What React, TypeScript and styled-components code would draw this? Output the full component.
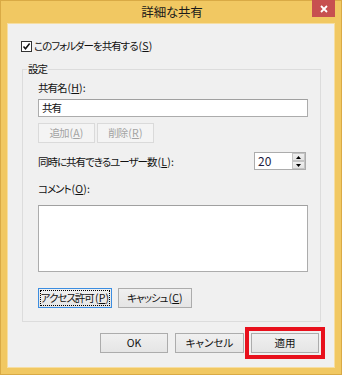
import styled, { createGlobalStyle, css } from 'styled-components';

const GlobalStyle = createGlobalStyle`
  html, body {
    margin: 0;
    padding: 0;
    background: #ffffff;
  }
  body {
    font-family: "Noto Sans CJK JP", "Noto Sans", sans-serif;
    font-size: 10.5px;
    color: #111111;
    font-feature-settings: "palt" 1;
    font-variant-east-asian: proportional-width;
    letter-spacing: -1px;
  }
`;

const Window = styled.div`
  box-sizing: border-box;
  width: 342px;
  height: 375px;
  display: flex;
  flex-direction: column;
  background: #f1c862;
  border: 1px solid #d9aa45;
  padding: 0 6px 6px;
`;

const TitleBar = styled.div`
  height: 22px;
  display: grid;
  grid-template-columns: 1fr auto 1fr;
  align-items: start;
`;

const Title = styled.div`
  grid-column: 2;
  font-size: 12.5px;
  line-height: 22px;
  color: #1a1a1a;
  letter-spacing: -0.2px;
  padding-left: 2px;
`;

const CloseButton = styled.div`
  grid-column: 3;
  justify-self: end;
  width: 23px;
  height: 17px;
  margin-top: -1px;
  background: #c75050;
  display: flex;
  align-items: center;
  justify-content: center;
`;

const Client = styled.div`
  flex: 1;
  display: flex;
  flex-direction: column;
  background: #f0f0f0;
  border: 1px solid #f6dea2;
  padding: 14px 13px 0 14px;
`;

const CheckRow = styled.label`
  display: flex;
  align-items: center;
  gap: 2px;
  height: 16px;
  line-height: 16px;
  margin-left: -1px;
  white-space: nowrap;
`;

const CheckBox = styled.span`
  box-sizing: border-box;
  width: 11px;
  height: 11px;
  border: 1px solid #333333;
  background: #ffffff;
  display: flex;
  align-items: center;
  justify-content: center;
`;

const Key = styled.span`
  letter-spacing: 0.2px;
  margin-left: 1px;
`;

const Group = styled.fieldset`
  margin: 8px 0 0 0;
  padding: 5px 12px 13px 15px;
  border: 1px solid #dcdcdc;
  min-width: 0;
  display: flex;
  flex-direction: column;
`;

const Legend = styled.legend`
  padding: 0 1px;
  margin-left: -11px;
  line-height: 14px;
`;

const Label = styled.div<{ $gap?: number }>`
  line-height: 14px;
  margin-top: ${(p) => p.$gap ?? 0}px;
  white-space: nowrap;
`;

const TextBox = styled.div<{ $h: number; $gap: number }>`
  box-sizing: border-box;
  height: ${(p) => p.$h}px;
  margin-top: ${(p) => p.$gap}px;
  background: #ffffff;
  border: 1px solid #acacac;
  border-top-color: #a0a0a0;
  padding: 0 3px;
  line-height: 16px;
`;

const ButtonRow = styled.div<{ $gap: number; $space: number }>`
  display: flex;
  gap: ${(p) => p.$space}px;
  margin-top: ${(p) => p.$gap}px;
`;

const Button = styled.div<{ $w: number; $disabled?: boolean; $focused?: boolean }>`
  box-sizing: border-box;
  width: ${(p) => p.$w}px;
  height: 20px;
  display: flex;
  align-items: center;
  justify-content: center;
  white-space: nowrap;
  border: 1px solid #acacac;
  background: linear-gradient(#f0f0f0, #e5e5e5);
  line-height: 14px;
  ${(p) =>
    p.$disabled &&
    css`
      background: #f4f4f4;
      border-color: #dadada;
      color: #a3a3a3;
    `}
  ${(p) =>
    p.$focused &&
    css`
      border-color: #3c8de0;
      outline: 1px dotted #000000;
      outline-offset: -3px;
    `}
`;

const SpinRow = styled.div`
  display: flex;
  align-items: center;
  justify-content: space-between;
  margin-top: 9px;
  padding-right: 2px;
  white-space: nowrap;
`;

const Spinner = styled.div`
  box-sizing: border-box;
  width: 52px;
  height: 18px;
  display: flex;
  align-items: stretch;
  background: #ffffff;
  border: 1px solid #acacac;
`;

const SpinValue = styled.div`
  flex: 1;
  padding-left: 3px;
  line-height: 16px;
  font-size: 12px;
  letter-spacing: 0;
  color: #1c1c40;
`;

const SpinButtons = styled.div`
  width: 13px;
  display: flex;
  flex-direction: column;
`;

const SpinButton = styled.div`
  flex: 1;
  box-sizing: border-box;
  background: linear-gradient(#efefef, #e3e3e3);
  border: 1px solid #c4c4c4;
  display: flex;
  align-items: center;
  justify-content: center;
`;

const Footer = styled.div`
  display: flex;
  justify-content: flex-end;
  gap: 7px;
  margin-top: 11px;
  padding-right: 2px;
  letter-spacing: 0;
`;

const ApplyButton = styled(Button)`
  outline: 4px solid #e8101c;
  outline-offset: 2px;
`;

function Arrow({ up }: { up?: boolean }) {
  return (
    <svg width="5" height="3" viewBox="0 0 5 3">
      <polygon points={up ? '0,3 5,3 2.5,0' : '0,0 5,0 2.5,3'} fill="#000" />
    </svg>
  );
}

function Accel({ k, colon }: { k: string; colon?: boolean }) {
  return (
    <Key>
      (<u>{k}</u>){colon ? ':' : ''}
    </Key>
  );
}

export default function App() {
  return (
    <>
      <GlobalStyle />
      <Window>
        <TitleBar>
          <Title>詳細な共有</Title>
          <CloseButton>
            <svg width="8" height="8" viewBox="0 0 8 8">
              <path d="M1 1 L7 7 M7 1 L1 7" stroke="#ffffff" strokeWidth="1.8" />
            </svg>
          </CloseButton>
        </TitleBar>
        <Client>
          <CheckRow>
            <CheckBox>
              <svg width="9" height="9" viewBox="0 0 9 9">
                <path d="M1.5 4.5 L3.5 6.8 L7.6 1.5" stroke="#111" strokeWidth="1.5" fill="none" />
              </svg>
            </CheckBox>
            <span>
              このフォルダーを共有する<Accel k="S" />
            </span>
          </CheckRow>
          <Group>
            <Legend>設定</Legend>
            <Label>
              共有名<Accel k="H" colon />
            </Label>
            <TextBox $h={18} $gap={4}>
              共有
            </TextBox>
            <ButtonRow $gap={6} $space={2}>
              <Button $w={57} $disabled>
                追加<Accel k="A" />
              </Button>
              <Button $w={57} $disabled>
                削除<Accel k="R" />
              </Button>
            </ButtonRow>
            <SpinRow>
              <span>
                同時に共有できるユーザー数<Accel k="L" colon />
              </span>
              <Spinner>
                <SpinValue>20</SpinValue>
                <SpinButtons>
                  <SpinButton>
                    <Arrow up />
                  </SpinButton>
                  <SpinButton>
                    <Arrow />
                  </SpinButton>
                </SpinButtons>
              </Spinner>
            </SpinRow>
            <Label $gap={12}>
              コメント<Accel k="O" colon />
            </Label>
            <TextBox $h={67} $gap={9} />
            <ButtonRow $gap={16} $space={6}>
              <Button $w={74} $focused>
                アクセス許可<Accel k="P" />
              </Button>
              <Button $w={74}>
                キャッシュ<Accel k="C" />
              </Button>
            </ButtonRow>
          </Group>
          <Footer>
            <Button $w={68}>OK</Button>
            <Button $w={69}>キャンセル</Button>
            <ApplyButton $w={68}>適用</ApplyButton>
          </Footer>
        </Client>
      </Window>
    </>
  );
}
